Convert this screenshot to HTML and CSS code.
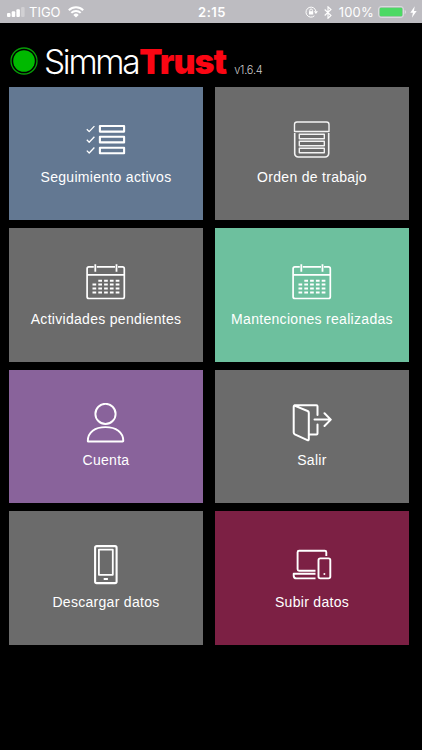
FILE: index.html
```html
<!DOCTYPE html>
<html lang="es">

<head>
  <meta charset="utf-8">
  <meta name="viewport" content="width=device-width, initial-scale=1.0">
  <title>SimmaTrust</title>
  <link rel="stylesheet" href="styles.css">
</head>

<body>
  <div class="status">
    <div class="status-left">
      <svg class="signal" width="18" height="10" viewBox="0 0 18 10" fill="#fff">
        <rect x="0" y="6" width="3.5" height="4" rx="1" />
        <rect x="4.7" y="4.3" width="3.5" height="5.7" rx="1" />
        <rect x="9.4" y="2.3" width="3.5" height="7.7" rx="1" />
        <rect x="14.1" y="0" width="3.5" height="10" rx="1" opacity=".3" />
      </svg>
      <span class="carrier">TIGO</span>
      <svg class="wifi" width="16" height="12" viewBox="0 0 16 12" fill="none" stroke="#fff" stroke-width="2">
        <path d="M.8 4.2a10.2 10.2 0 0 1 14.4 0M3.3 6.9a6.6 6.6 0 0 1 9.4 0" />
        <path d="M8 11.6L5.3 8.9a3.8 3.8 0 0 1 5.4 0z" fill="#fff" stroke="none" />
      </svg>
    </div>
    <span class="clock">2:15</span>
    <div class="status-right">
      <svg class="lock" width="13" height="12" viewBox="0 0 13 12" fill="none" stroke="#fff" stroke-width="1">
        <path d="M9.4 9.8A5 5 0 1 1 10.9 5.2" />
        <path d="M8.9 5.2h4l-2 2.7z" fill="#fff" stroke="none" />
        <rect x="4" y="5.2" width="4.2" height="3.3" fill="#fff" stroke="none" />
        <path d="M4.8 5.5V4.3a1.3 1.3 0 0 1 2.6 0v1.2" />
      </svg>
      <svg class="bluetooth" width="8" height="13" viewBox="0 0 8 13" fill="none" stroke="#fff" stroke-width="1.1">
        <path d="M.7 3.5l6.3 6-3 2.8V.8l3 2.7-6.3 6" />
      </svg>
      <span class="percent">100%</span>
      <svg class="battery" width="29" height="12" viewBox="0 0 29 12">
        <rect x=".6" y=".6" width="24.8" height="10.8" rx="2.5" fill="none" stroke="#dedde2" stroke-width="1" />
        <rect x="1.7" y="1.7" width="22.6" height="8.6" rx="1.3" fill="#4cd964" />
        <path d="M26.7 4v4q1.4-.7 1.4-2t-1.4-2z" fill="#dedde2" />
      </svg>
      <svg class="bolt" width="7" height="12" viewBox="0 0 7 12" fill="#fff">
        <path d="M4.7.2L.3 6.7h2.6l-1 5L6.7 5H4z" />
      </svg>
    </div>
  </div>

  <header class="header">
    <svg class="online" width="28" height="28" viewBox="0 0 28 28">
      <circle cx="14" cy="14" r="13" fill="none" stroke="#079b07" stroke-width="1.3" />
      <circle cx="14" cy="14" r="10.8" fill="#00b900" />
    </svg>
    <h1 class="logo"><span class="simma">Simma</span><span class="trust">Trust</span></h1>
    <span class="version">v1.6.4</span>
  </header>

  <main class="menu">
    <div class="tile blue">
      <svg class="icon" viewBox="0 0 40 40">
        <path stroke-width="1.3" d="M.8 9.2l2.4 2.4 5.2-5.5M.8 19.8l2.4 2.4 5.2-5.5M.8 30.6l2.4 2.4 5.2-5.5" />
        <path stroke-width="2.1" d="M13.9 6h24.2v5.6H13.9zM13.9 16.8h24.2v5.6H13.9zM13.9 27.7h24.2v5.6H13.9z" />
      </svg>
      <span class="label">Seguimiento activos</span>
    </div>
    <div class="tile">
      <svg class="icon" viewBox="0 0 40 40" opacity=".92">
        <path stroke-width="1.4" d="M2.5 11.5v-7A2.5 2.5 0 0 1 5 2h29.5A2.5 2.5 0 0 1 37 4.5v7z" />
        <path stroke-width="1.6" d="M2.7 13v20.5A3.5 3.5 0 0 0 6.2 37h27a3.5 3.5 0 0 0 3.5-3.5V13" />
        <path stroke-width="1.4" d="M7.3 14.2h25v4.5h-25zM7.3 21.2h25v4.5h-25zM7.3 28.2h25v4.5h-25z" />
      </svg>
      <span class="label">Orden de trabajo</span>
    </div>
    <div class="tile">
      <svg class="icon" viewBox="0 0 40 40">
        <rect x="1.1" y="4.9" width="37.2" height="31.6" rx="1.8" stroke-width="1.7" />
        <path stroke="#6b6b6b" stroke-width="3" d="M9.3 3v3.4M30.5 3v3.4" />
        <path stroke-width="1.8" d="M1 12.8h37.3M9.3 2.2v7.5M30.5 2.2v7.5" />
        <path stroke-width="2" stroke-dasharray="3.7 2.1" d="M12.3 18.8h21.6M6.5 22.6h27.2M6.5 26.5h27.2M6.5 30.4h27.2" />
      </svg>
      <span class="label">Actividades pendientes</span>
    </div>
    <div class="tile green">
      <svg class="icon" viewBox="0 0 40 40">
        <rect x="1.1" y="4.9" width="37.2" height="31.6" rx="1.8" stroke-width="1.7" />
        <path stroke="#6dc09e" stroke-width="3" d="M9.3 3v3.4M30.5 3v3.4" />
        <path stroke-width="1.8" d="M1 12.8h37.3M9.3 2.2v7.5M30.5 2.2v7.5" />
        <path stroke-width="2" stroke-dasharray="3.7 2.1" d="M12.3 18.8h21.6M6.5 22.6h27.2M6.5 26.5h27.2M6.5 30.4h27.2" />
      </svg>
      <span class="label">Mantenciones realizadas</span>
    </div>
    <div class="tile purple">
      <svg class="icon" viewBox="0 0 40 40">
        <circle cx="19.5" cy="10.9" r="10.1" stroke-width="1.9" />
        <path stroke-width="1.9" d="M1.8 38C1.8 29 9 24.1 19.5 24.1S37.3 29 37.3 38q0 .5-.7.5H2.5q-.7 0-.7-.5z" />
      </svg>
      <span class="label">Cuenta</span>
    </div>
    <div class="tile">
      <svg class="icon" viewBox="0 0 40 40">
        <path stroke-width="2" stroke-linecap="round" d="M1.7 4v25.6q0 1.2 1.1 1.7l12.6 5.9q1.4.6 1.4-.9V9.8q0-1.2-1.2-1.8L3 2.9q-1.3-.6-1.3 1.1zM2.5 2.2h22q1 0 1 1V12M25.5 21.5v9q0 1-1 1h-7M22.5 16.6h16M32.5 10.2l6.3 6.4-6.3 6.4" />
      </svg>
      <span class="label">Salir</span>
    </div>
    <div class="tile">
      <svg class="icon" viewBox="0 0 40 40">
        <rect x="9.1" y="1.1" width="21.5" height="37" rx="1.6" stroke-width="2.1" />
        <rect x="12.9" y="4.6" width="13.9" height="25.2" stroke-width="1.8" />
        <path stroke-width="2" d="M17.7 34h4.2" />
      </svg>
      <span class="label">Descargar datos</span>
    </div>
    <div class="tile wine">
      <svg class="icon" viewBox="0 0 40 40">
        <path stroke-width="1.9" d="M23.5 25.7H7.1q-1.5 0-1.5-1.5V7.3q0-1.5 1.5-1.5h25.7q1.5 0 1.5 1.5v3.6M23.5 28.7H1.7v2q0 2.7 2.7 2.7h19.1" />
        <rect x="26.5" y="13.4" width="11.8" height="20" rx="1.8" stroke-width="1.9" />
        <circle cx="32.4" cy="29" r="1" fill="#fff" stroke="none" />
      </svg>
      <span class="label">Subir datos</span>
    </div>
  </main>
</body>

</html>
```
FILE: styles.css
```css
* {
  box-sizing: border-box;
}

body {
  margin: 0;
  background-color: black;
  color: white;
  font-family: "Liberation Sans", Arial, sans-serif;
}

.status {
  display: grid;
  grid-template-columns: 1fr auto 1fr;
  align-items: center;
  height: 23px;
  padding: 1px 5px 0 7px;
  background-color: #bdbcc1;
  font-family: Inter, sans-serif;
  font-size: 13px;
}

.status-left,
.status-right {
  display: flex;
  align-items: center;
}

.status-right {
  justify-content: flex-end;
}

.carrier {
  margin: 0 7px 0 4px;
}

.clock {
  font-weight: 600;
  letter-spacing: 0.5px;
}

.bluetooth {
  margin: 0 7px 0 6px;
}

.percent {
  margin-right: 4px;
  letter-spacing: 0.2px;
}

.bolt {
  margin-left: 3px;
}

.header {
  display: flex;
  align-items: baseline;
  height: 63.5px;
  padding: 16px 0 0 10px;
  font-family: Inter, sans-serif;
}

.online {
  align-self: flex-start;
  margin-top: 7.5px;
}

.logo {
  margin: 0 0 0 6px;
  font-size: 34px;
  line-height: 45px;
  white-space: nowrap;
}

.simma {
  margin-right: 1px;
  font-size: 33.5px;
  font-weight: 300;
  letter-spacing: -2.3px;
}

.trust {
  color: #fb0613;
  font-weight: 900;
  letter-spacing: -1px;
}

.version {
  margin-left: 8px;
  color: #ccc;
  font-size: 11px;
  font-weight: 300;
  letter-spacing: -0.2px;
}

.menu {
  display: grid;
  grid-template-columns: 194px 194px;
  grid-auto-rows: 133.6px;
  gap: 8px 12px;
  padding-left: 9px;
}

.tile {
  display: flex;
  flex-direction: column;
  align-items: center;
  padding-top: 33.6px;
  background-color: #6b6b6b;
}

.blue {
  background-color: #637892;
}

.green {
  background-color: #6dc09e;
}

.purple {
  background-color: #89639b;
}

.wine {
  background-color: #7c2044;
}

.icon {
  width: 40px;
  height: 40px;
  fill: none;
  stroke: white;
  stroke-linejoin: round;
}

.label {
  margin-top: 9px;
  font-size: 14px;
  line-height: 16px;
  letter-spacing: 0.3px;
}
```
